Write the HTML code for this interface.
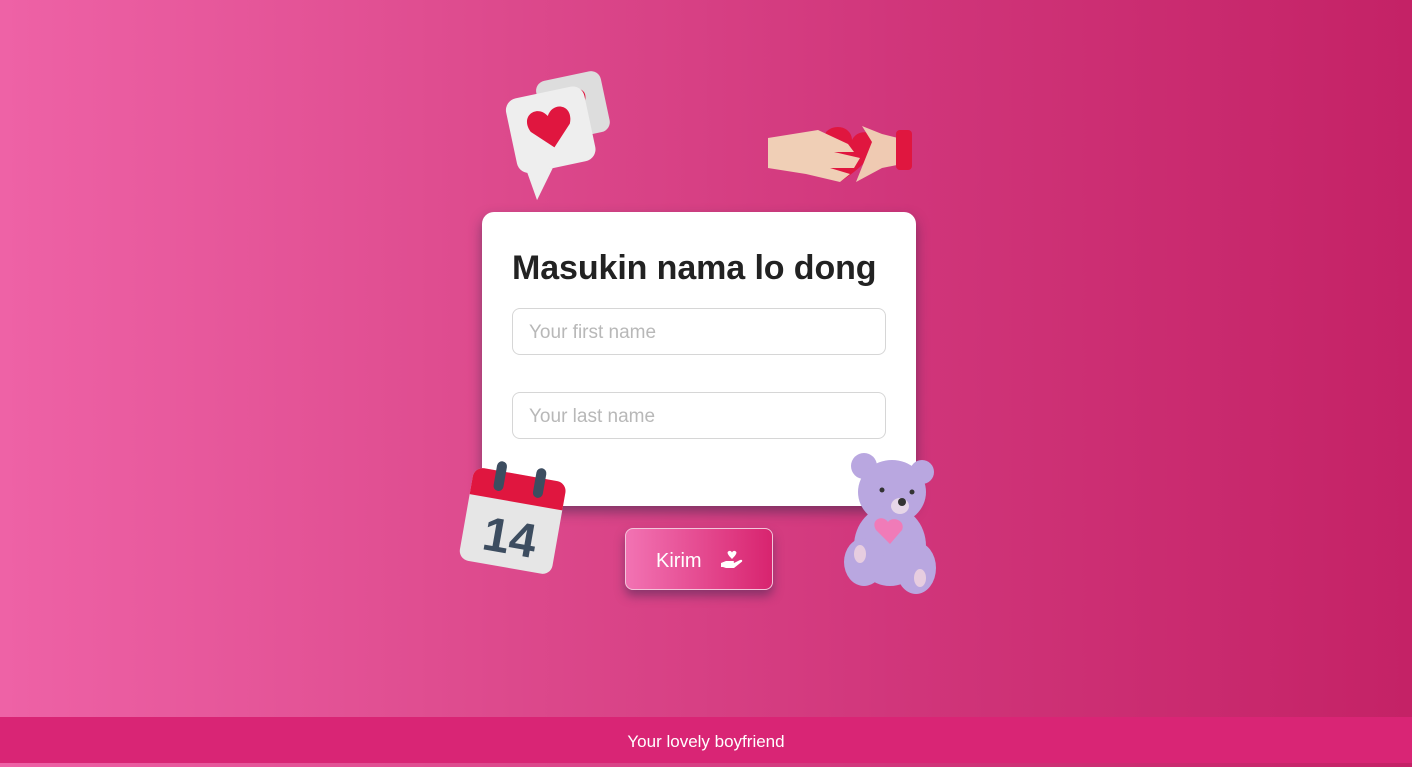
<!DOCTYPE html><html><head><style>
*{box-sizing:border-box;margin:0;padding:0}
body{width:1412px;height:763px;overflow:hidden;position:relative;font-family:"Liberation Sans",sans-serif;background:linear-gradient(90deg,#ee62a6 0%,#dd4a8d 35%,#d0357a 65%,#c42266 100%)}
.card{position:absolute;left:482px;top:212px;width:434px;height:294px;background:#fff;border-radius:12px;box-shadow:0 6px 12px rgba(40,40,70,.5)}
h1{position:absolute;left:30px;top:37px;font-size:34px;font-weight:bold;color:#222;white-space:nowrap;letter-spacing:-.1px}
.in{position:absolute;left:30px;width:374px;height:47px;border:1px solid #d6d6d6;border-radius:8px;font-size:19px;color:#b8b8b8;padding:13px 16px}
.btn{position:absolute;left:625px;top:528px;width:148px;height:62px;border-radius:8px;border:1px solid #f3c5da;background:linear-gradient(90deg,#f273b3,#d8246f);box-shadow:0 6px 10px rgba(60,40,80,.5);color:#fff;font-size:20px}
.foot{position:absolute;left:0;top:717px;width:1412px;height:46px;background:#d92575;color:#fff;font-size:17px;text-align:center;line-height:50px}
svg{position:absolute}
</style></head><body>
<svg style="left:500px;top:66px" width="116" height="136" viewBox="0 0 116 136">
<g transform="rotate(-12 80 40)"><rect x="40" y="8" width="66" height="62" rx="10" fill="#ddd"/><path d="M72 28c-6-10-20-4-14 8l14 14 14-14c6-12-8-18-14-8z" fill="#e0163f"/></g>
<g transform="rotate(-12 50 70)"><rect x="12" y="26" width="80" height="76" rx="12" fill="#eee"/><path d="M20 100l4 30 22-28z" fill="#eee"/><path d="M52 50c-8-14-28-6-20 12l20 20 20-20c8-18-12-26-20-12z" fill="#e0163f"/></g>
</svg>
<svg style="left:766px;top:118px" width="150" height="70" viewBox="0 0 150 70">
<path d="M60 14c10-10 26-4 26 8 6-12 24-10 22 6-2 14-22 28-34 36-12-10-24-26-14-50z" fill="#e0163f"/>
<path d="M2 20l50-8 30 14 6 8-20 0 26 6-6 10-24 0 20 6-10 8-34-8-38-6z" fill="#f0cfb6"/>
<path d="M96 8l20 8 16 4 4 26-20 4-26 14 4-10 12-30z" fill="#efcab2"/>
<rect x="130" y="12" width="16" height="40" rx="4" fill="#e0163f"/>
</svg>
<div class="card"><h1>Masukin nama lo dong</h1>
<div class="in" style="top:96px">Your first name</div>
<div class="in" style="top:180px">Your last name</div></div>
<svg style="left:456px;top:460px" width="114" height="118" viewBox="0 0 114 118">
<g transform="rotate(10 57 59)"><rect x="10" y="14" width="94" height="94" rx="10" fill="#e6e6e6"/><path d="M20 14h74a10 10 0 0 1 10 10v18H10V24a10 10 0 0 1 10-10z" fill="#e0163f"/>
<rect x="32" y="4" width="10" height="30" rx="5" fill="#3d4d60"/><rect x="72" y="4" width="10" height="30" rx="5" fill="#3d4d60"/>
<text x="57" y="94" text-anchor="middle" font-size="48" font-weight="bold" fill="#3d4d60" font-family="Liberation Sans">14</text></g></svg>
<svg style="left:842px;top:450px" width="96" height="146" viewBox="0 0 96 146">
<g fill="#b9a7e0"><circle cx="22" cy="16" r="13"/><circle cx="80" cy="22" r="12"/><ellipse cx="50" cy="42" rx="34" ry="32"/><ellipse cx="48" cy="96" rx="36" ry="40"/><ellipse cx="22" cy="112" rx="20" ry="24"/><ellipse cx="74" cy="118" rx="20" ry="26"/></g>
<ellipse cx="58" cy="56" rx="9" ry="8" fill="#e6d6e8"/><circle cx="60" cy="52" r="4" fill="#333"/><circle cx="40" cy="40" r="2.5" fill="#333"/><circle cx="70" cy="42" r="2.5" fill="#333"/>
<path d="M46 72c-6-8-18-2-12 8l14 14 12-14c4-10-10-14-14-8z" fill="#f07bb8"/>
<ellipse cx="18" cy="104" rx="6" ry="9" fill="#e7cde0"/><ellipse cx="78" cy="128" rx="6" ry="9" fill="#e7cde0"/></svg>
<div class="btn"><span style="position:absolute;left:30px;top:21px">Kirim</span>
<svg style="left:94px;top:21px" width="24" height="20" viewBox="0 0 24 20"><path d="M12 9C8 5 6 2 9 1c1.5-.5 2.5.5 3 1.5.5-1 1.5-2 3-1.5 3 1 1 4-3 8z" fill="#fff"/><path d="M1 13l5-2h7c1.5 0 1.5 2 0 2H9h5l6-3c2-1 3 1 1.5 2L14 18H6l-3-1H1z" fill="#fff"/></svg></div>
<div class="foot">Your lovely boyfriend</div>
</body></html>
